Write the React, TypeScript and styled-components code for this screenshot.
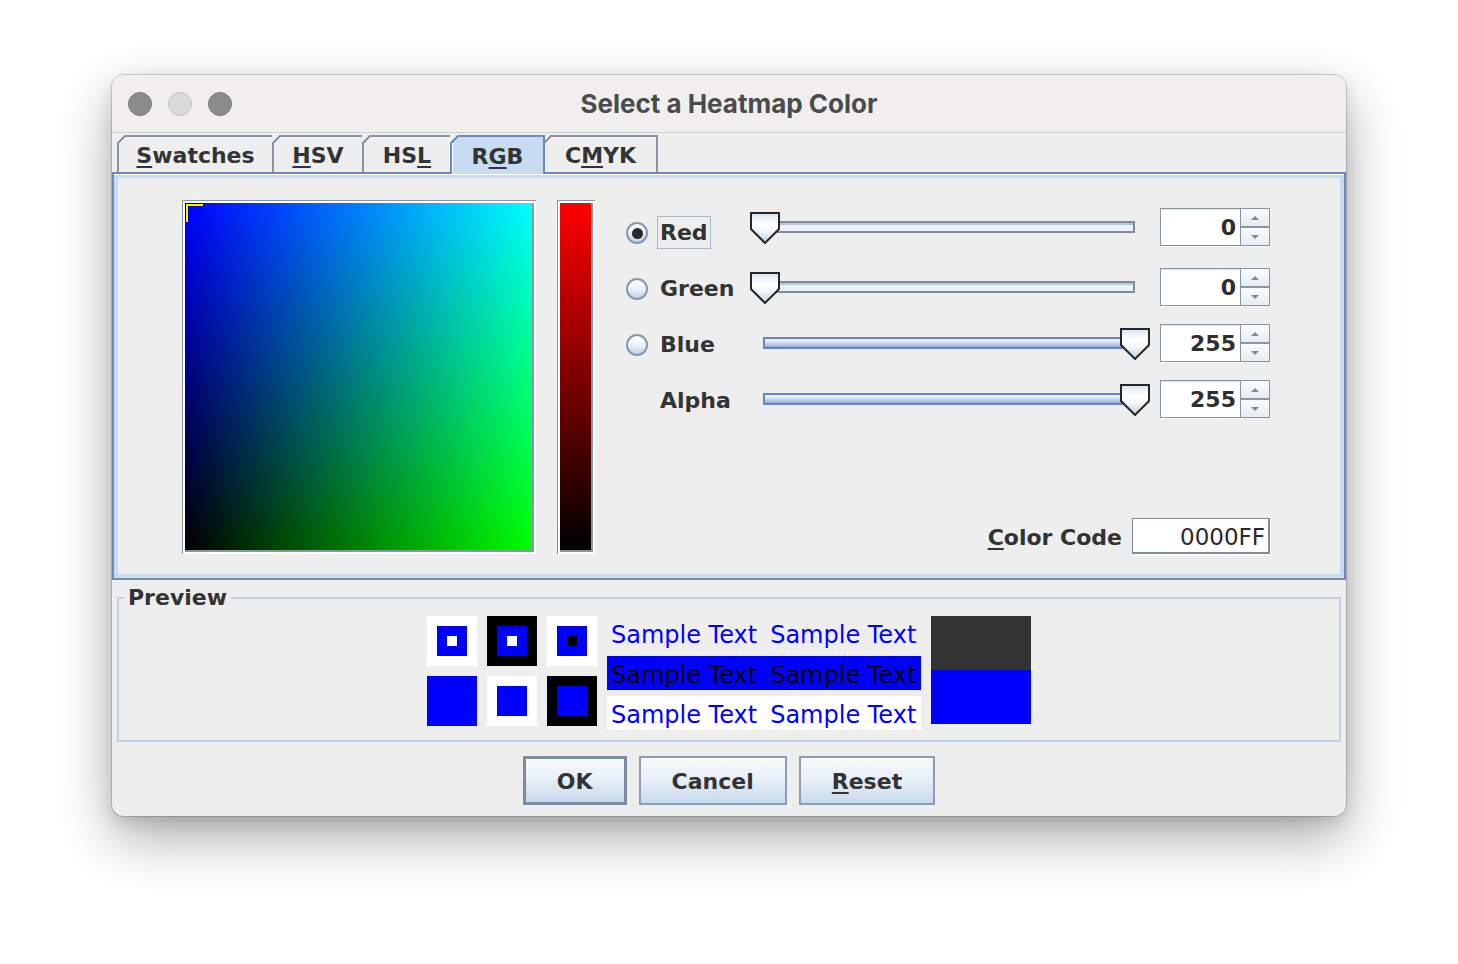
import React from 'react';
import styled, { createGlobalStyle, css } from 'styled-components';

const GlobalStyle = createGlobalStyle`
  html, body { margin: 0; padding: 0; background: #ffffff; }
  body { font-family: "DejaVu Sans", sans-serif; }
  * { box-sizing: border-box; }
`;

const JAVA_FONT = `"DejaVu Sans", "Liberation Sans", sans-serif`;

const Stage = styled.div`
  width: 1458px;
  height: 964px;
  padding: 75px 0 0 112px;
`;

const Window = styled.div`
  width: 1234px;
  height: 741px;
  border-radius: 12px;
  background: #eeeeee;
  box-shadow: 0 0 0 1px rgba(0, 0, 0, 0.16), 0 22px 55px rgba(0, 0, 0, 0.33),
    0 6px 16px rgba(0, 0, 0, 0.12);
  overflow: hidden;
  display: flex;
  flex-direction: column;
`;

const TitleBar = styled.div`
  flex: none;
  height: 58px;
  background: #f0efee;
  border-bottom: 1px solid #d2d2d2;
  display: grid;
  grid-template-columns: 1fr auto 1fr;
  align-items: center;
`;

const Lights = styled.div`
  display: flex;
  gap: 16px;
  padding-left: 16px;
`;

const Light = styled.span<{ $dim?: boolean }>`
  width: 24px;
  height: 24px;
  border-radius: 50%;
  background: ${(p) => (p.$dim ? '#d9d9d8' : '#8b8b8b')};
  border: 1px solid ${(p) => (p.$dim ? '#c6c6c6' : '#7a7a7a')};
`;

const Title = styled.div`
  font-family: "Inter", "Open Sans", sans-serif;
  font-weight: 700;
  font-size: 26px;
  color: #4b4b4b;
`;

const TabStrip = styled.div`
  flex: none;
  height: 39px;
  padding: 2px 0 0 5px;
  display: flex;
  align-items: flex-start;
`;

const Tab = styled.div<{ $w: number; $active?: boolean }>`
  position: relative;
  width: ${(p) => p.$w}px;
  height: 37px;
  margin-right: -2px;
  border: 2px solid #8594a9;
  border-bottom: none;
  display: flex;
  align-items: center;
  justify-content: center;
  font-family: ${JAVA_FONT};
  font-weight: 700;
  font-size: 22px;
  color: #333333;
  padding-top: 2px;
  background: #eeeeee;
  &::before {
    content: '';
    position: absolute;
    left: -2px;
    top: -2px;
    width: 9px;
    height: 9px;
    background: linear-gradient(135deg, #eeeeee 0 42%, #8594a9 42% 58%, transparent 58%);
  }
  ${(p) =>
    p.$active &&
    css`
      z-index: 1;
      height: 39px;
      background: #c8dcf1;
      border-color: #6d88bd;
      box-shadow: inset 1px 0 0 #ffffff;
      &::before {
        background: linear-gradient(135deg, #eeeeee 0 42%, #6d88bd 42% 58%, transparent 58%);
      }
    `}
`;

const U = styled.span`
  text-decoration: underline;
  text-decoration-thickness: 2px;
  text-underline-offset: 3px;
`;

const Panel = styled.div`
  flex: none;
  height: 408px;
  border: 2px solid #6d88bd;
  border-bottom-color: #7b8ba1;
  box-shadow: inset 0 1px 0 #ffffff, inset 0 0 0 4px #c8dcf1;
  display: flex;
  align-items: flex-start;
  padding: 26px 0 0 68px;
`;

const Frame = styled.div`
  position: relative;
  background: #ffffff;
  border-top: 1px solid #8797a8;
  border-left: 1px solid #8797a8;
  padding: 2px;
`;

const Square = styled.div`
  width: 349px;
  height: 349px;
  border-right: 2px solid #8797a8;
  border-bottom: 2px solid #8797a8;
  background: linear-gradient(to bottom, #0000ff, #000000),
    linear-gradient(to right, #000000, #00ff00);
  background-blend-mode: screen;
`;

const Marker = styled.div`
  position: absolute;
  left: 3px;
  top: 3px;
  width: 17px;
  height: 18px;
  border-top: 2px solid #ffee00;
  border-left: 2px solid #ffee00;
  box-shadow: -1px -1px 0 #000000;
`;

const BarFrame = styled(Frame)`
  margin-left: 21px;
`;

const Bar = styled.div`
  width: 33px;
  height: 349px;
  border-right: 2px solid #8797a8;
  border-bottom: 2px solid #8797a8;
  background: linear-gradient(to bottom, #ff0000, #000000);
`;

const Controls = styled.div`
  margin-left: 31px;
  padding-top: 12px;
  display: flex;
  flex-direction: column;
  width: 644px;
`;

const Row = styled.div`
  height: 38px;
  display: flex;
  align-items: flex-start;
  & + & {
    margin-top: 18px;
  }
`;

const RadioCell = styled.div`
  width: 22px;
  height: 22px;
  margin-top: 10px;
  margin-right: 9px;
  flex: none;
  display: flex;
  align-items: center;
  justify-content: center;
`;

const Radio = styled.span<{ $checked?: boolean }>`
  width: 22px;
  height: 22px;
  border-radius: 50%;
  border: 2px solid #8398ae;
  background: linear-gradient(to bottom, #ffffff 0%, #f2f6fb 40%, #c3d4e8 100%);
  display: flex;
  align-items: center;
  justify-content: center;
  &::after {
    content: '';
    width: 11px;
    height: 11px;
    border-radius: 50%;
    background: ${(p) => (p.$checked ? '#2a2a2a' : 'transparent')};
  }
`;

const Label = styled.div`
  width: 93px;
  height: 33px;
  flex: none;
  margin-top: 4px;
  display: flex;
  align-items: center;
`;

const LabelText = styled.span<{ $focus?: boolean }>`
  font-family: ${JAVA_FONT};
  font-weight: 700;
  font-size: 22px;
  line-height: 31px;
  height: 33px;
  color: #333333;
  padding: 0 2px;
  border: 1px solid ${(p) => (p.$focus ? '#a5bad2' : 'transparent')};
`;

const SliderBox = styled.div<{ $lift?: boolean }>`
  position: relative;
  width: 400px;
  height: 38px;
  flex: none;
  padding: 13px 15px 0 13px;
  margin-top: ${(p) => (p.$lift ? -4 : 0)}px;
`;

const Track = styled.div<{ $filled?: boolean }>`
  height: 12px;
  ${(p) =>
    p.$filled
      ? css`
          border: 2px solid #6a85be;
          background: linear-gradient(to bottom, #f2f6fb 0%, #d6e3f1 40%, #b3c8e0 75%, #91a9cb 100%);
        `
      : css`
          border: 2px solid #7f8b98;
          border-left: none;
          background: linear-gradient(to bottom, #b5c7db 0%, #b5c7db 30%, #eef2f7 31%, #eef2f7 100%);
        `}
`;

const Thumb = styled.svg`
  position: absolute;
  top: 4px;
  width: 30px;
  height: 32px;
`;

const Spinner = styled.div<{ $lift?: boolean }>`
  margin-left: 10px;
  width: 110px;
  height: 38px;
  flex: none;
  display: flex;
  margin-top: ${(p) => (p.$lift ? -4 : 0)}px;
`;

const SpinField = styled.div`
  width: 81px;
  height: 38px;
  background: #ffffff;
  border: 1px solid #8694a4;
  box-shadow: inset 0 1px 0 #e6e6e6, 1px 1px 0 #ffffff;
  display: flex;
  align-items: center;
  justify-content: flex-end;
  padding-right: 4px;
  font-family: ${JAVA_FONT};
  font-weight: 700;
  font-size: 22px;
  color: #2e2e2e;
`;

const SpinButtons = styled.div`
  width: 29px;
  display: flex;
  flex-direction: column;
`;

const SpinButton = styled.div<{ $down?: boolean }>`
  height: 19px;
  border: 1px solid #8694a4;
  border-left: none;
  background: linear-gradient(to bottom, #fbfcfe, #e5ecf4);
  display: flex;
  align-items: center;
  justify-content: center;
  &::after {
    content: '';
    width: 0;
    height: 0;
    border-left: 4px solid transparent;
    border-right: 4px solid transparent;
    ${(p) =>
      p.$down
        ? 'border-top: 4px solid #7d8a99;'
        : 'border-bottom: 4px solid #7d8a99;'}
  }
`;

const CodeRow = styled.div`
  margin-top: 100px;
  display: flex;
  justify-content: flex-end;
  align-items: center;
  gap: 10px;
`;

const CodeLabel = styled.span`
  font-family: ${JAVA_FONT};
  font-weight: 700;
  font-size: 22px;
  color: #333333;
  padding-top: 3px;
`;

const CodeField = styled.div`
  width: 138px;
  height: 36px;
  background: #ffffff;
  border: 1px solid #7d8b9b;
  border-bottom-width: 2px;
  border-right-width: 2px;
  box-shadow: 1px 1px 0 #ffffff;
  display: flex;
  align-items: center;
  justify-content: flex-end;
  padding: 2px 3px 0 0;
  font-family: ${JAVA_FONT};
  font-size: 23px;
  color: #2a2a2a;
`;

const Preview = styled.fieldset`
  margin: 5px 5px 0;
  padding: 5px 0 10px;
  border: 2px solid #bdd3ea;
  min-width: 0;
`;

const Legend = styled.legend`
  margin-left: 5px;
  padding: 0 4px;
  font-family: ${JAVA_FONT};
  font-weight: 700;
  font-size: 22px;
  line-height: 26px;
  color: #333333;
`;

const PreviewBody = styled.div`
  display: flex;
  justify-content: center;
  align-items: flex-start;
  gap: 10px;
`;

const SwatchGrid = styled.div`
  display: grid;
  grid-template-columns: repeat(3, 50px);
  grid-auto-rows: 50px;
  gap: 10px;
`;

const Swatch = styled.div<{ $bg: string }>`
  background: ${(p) => p.$bg};
  display: flex;
  align-items: center;
  justify-content: center;
`;

const SwatchInner = styled.div<{ $dot?: string }>`
  width: 30px;
  height: 30px;
  background: #0000ff;
  display: flex;
  align-items: center;
  justify-content: center;
  &::after {
    content: '';
    width: 10px;
    height: 10px;
    background: ${(p) => p.$dot || 'transparent'};
  }
`;

const SampleColumn = styled.div`
  display: flex;
  flex-direction: column;
  gap: 6px;
`;

const SampleRow = styled.div<{ $bg: string; $fg: string }>`
  height: 34px;
  width: 314px;
  display: flex;
  gap: 13px;
  padding: 5px 0 0 4px;
  align-items: center;
  background: ${(p) => p.$bg};
  color: ${(p) => p.$fg};
  font-family: ${JAVA_FONT};
  font-size: 24px;
  line-height: 29px;
  white-space: nowrap;
  overflow: hidden;
`;

const ColorBlock = styled.div`
  width: 100px;
  display: flex;
  flex-direction: column;
`;

const BlockPart = styled.div<{ $bg: string }>`
  height: 54px;
  background: ${(p) => p.$bg};
`;

const Footer = styled.div`
  display: flex;
  justify-content: center;
  gap: 12px;
  margin-top: 14px;
`;

const Button = styled.button<{ $default?: boolean }>`
  height: 49px;
  padding: 2px 31px 0;
  border: ${(p) => (p.$default ? '3px solid #7b8ba0' : '2px solid #8a9db5')};
  background: linear-gradient(to bottom, #f7f9fc 0%, #e9f0f8 45%, #c8d9ec 100%);
  font-family: ${JAVA_FONT};
  font-weight: 700;
  font-size: 22px;
  color: #333333;
  box-shadow: inset 0 1px 0 #ffffff;
`;

type Channel = { name: string; value: number; checked?: boolean; radio: boolean; focus?: boolean };

const channels: Channel[] = [
  { name: 'Red', value: 0, checked: true, radio: true, focus: true },
  { name: 'Green', value: 0, radio: true },
  { name: 'Blue', value: 255, radio: true },
  { name: 'Alpha', value: 255, radio: false },
];

const ThumbShape = () => (
  <>
    <defs>
      <linearGradient id="thumbFill" x1="0" y1="0" x2="0" y2="1">
        <stop offset="0" stopColor="#d6e4f3" />
        <stop offset="0.35" stopColor="#ffffff" />
        <stop offset="0.6" stopColor="#f4f8fc" />
        <stop offset="1" stopColor="#b7cfe8" />
      </linearGradient>
    </defs>
    <path
      d="M1 1 H29 V17 L15 31 L1 17 Z"
      fill="url(#thumbFill)"
      stroke="#262626"
      strokeWidth="2"
      strokeLinejoin="miter"
    />
  </>
);

const tabs: { label: React.ReactNode; w: number; active?: boolean }[] = [
  { label: <><U>S</U>watches</>, w: 157 },
  { label: <><U>H</U>SV</>, w: 92 },
  { label: <>HS<U>L</U></>, w: 90 },
  { label: <>R<U>G</U>B</>, w: 95, active: true },
  { label: <>C<U>M</U>YK</>, w: 115 },
];

export default function App() {
  return (
    <Stage>
      <GlobalStyle />
      <Window>
        <TitleBar>
          <Lights>
            <Light />
            <Light $dim />
            <Light />
          </Lights>
          <Title>Select a Heatmap Color</Title>
          <div />
        </TitleBar>

        <TabStrip>
          {tabs.map((t, i) => (
            <Tab key={i} $w={t.w} $active={t.active}>
              {t.label}
            </Tab>
          ))}
        </TabStrip>

        <Panel>
          <Frame>
            <Square />
            <Marker />
          </Frame>
          <BarFrame>
            <Bar />
          </BarFrame>
          <Controls>
            {channels.map((c, i) => (
              <Row key={c.name}>
                <RadioCell>{c.radio && <Radio $checked={c.checked} />}</RadioCell>
                <Label>
                  <LabelText $focus={c.focus}>{c.name}</LabelText>
                </Label>
                <SliderBox $lift={i === 0}>
                  <Track $filled={c.value > 0} />
                  <Thumb viewBox="0 0 30 32" style={{ left: (c.value / 255) * 370 }}>
                    <ThumbShape />
                  </Thumb>
                </SliderBox>
                <Spinner $lift={i === 0}>
                  <SpinField>{c.value}</SpinField>
                  <SpinButtons>
                    <SpinButton />
                    <SpinButton $down />
                  </SpinButtons>
                </Spinner>
              </Row>
            ))}
            <CodeRow>
              <CodeLabel>
                <U>C</U>olor Code
              </CodeLabel>
              <CodeField>0000FF</CodeField>
            </CodeRow>
          </Controls>
        </Panel>

        <Preview>
          <Legend>Preview</Legend>
          <PreviewBody>
            <SwatchGrid>
              <Swatch $bg="#ffffff"><SwatchInner $dot="#ffffff" /></Swatch>
              <Swatch $bg="#000000"><SwatchInner $dot="#ffffff" /></Swatch>
              <Swatch $bg="#ffffff"><SwatchInner $dot="#000000" /></Swatch>
              <Swatch $bg="#0000ff" />
              <Swatch $bg="#ffffff"><SwatchInner /></Swatch>
              <Swatch $bg="#000000"><SwatchInner /></Swatch>
            </SwatchGrid>
            <SampleColumn>
              <SampleRow $bg="transparent" $fg="#0000ff">
                <span>Sample Text</span>
                <span>Sample Text</span>
              </SampleRow>
              <SampleRow $bg="#0000ff" $fg="#000000">
                <span>Sample Text</span>
                <span>Sample Text</span>
              </SampleRow>
              <SampleRow $bg="#ffffff" $fg="#0000ff">
                <span>Sample Text</span>
                <span>Sample Text</span>
              </SampleRow>
            </SampleColumn>
            <ColorBlock>
              <BlockPart $bg="#333333" />
              <BlockPart $bg="#0000ff" />
            </ColorBlock>
          </PreviewBody>
        </Preview>

        <Footer>
          <Button $default>OK</Button>
          <Button>Cancel</Button>
          <Button>
            <U>R</U>eset
          </Button>
        </Footer>
      </Window>
    </Stage>
  );
}
